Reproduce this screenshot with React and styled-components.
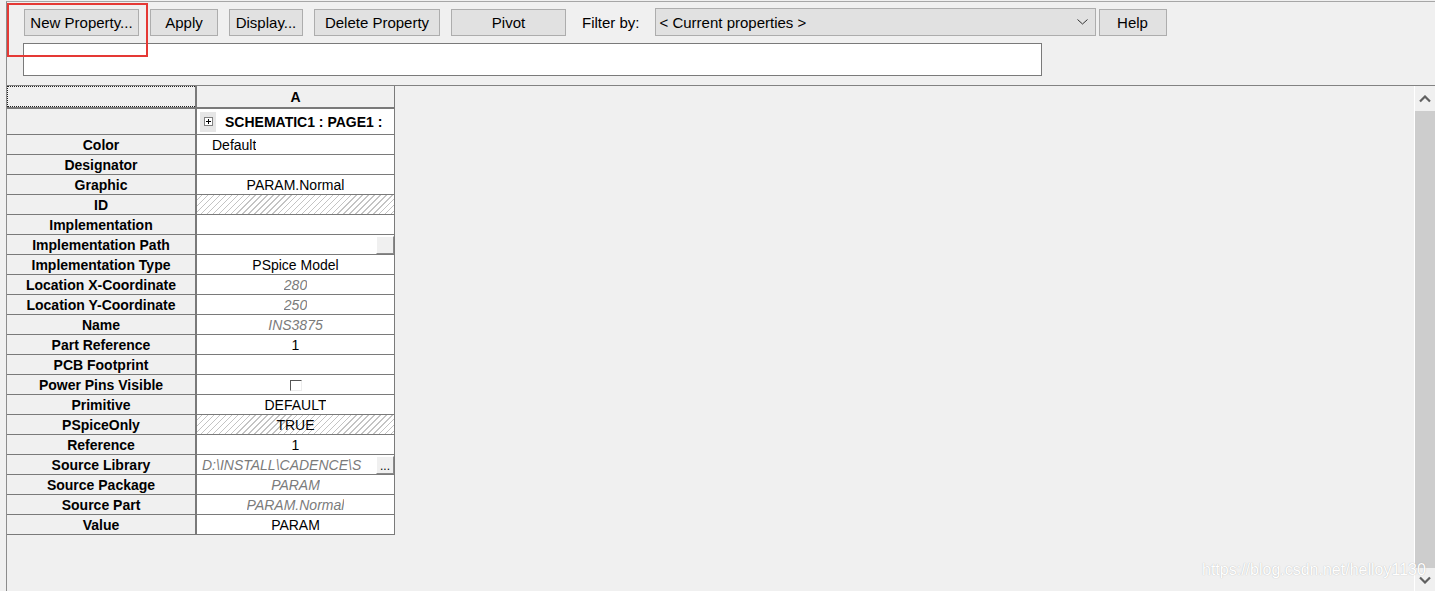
import styled, { createGlobalStyle } from 'styled-components';

const GlobalStyle = createGlobalStyle`
  html, body {
    margin: 0;
    padding: 0;
    background: #f0f0f0;
  }
  * {
    box-sizing: border-box;
  }
`;

const Page = styled.div`
  position: relative;
  width: 1435px;
  height: 591px;
  padding-top: 1px;
  background: #f0f0f0;
  overflow: hidden;
  font-family: "Liberation Sans", Arial, sans-serif;
  color: #000;
`;

const Window = styled.div`
  display: flex;
  flex-direction: column;
  height: 590px;
  margin-left: 6px;
  border-top: 1px solid #a6a6a6;
  border-left: 1px solid #8c8c8c;
`;

const Toolbar = styled.div`
  display: flex;
  flex-direction: column;
  height: 83px;
  padding: 6px 0 0 16px;
`;

const ButtonRow = styled.div`
  display: flex;
  align-items: flex-end;
  gap: 11px;
  height: 28px;
  padding-left: 1px;
`;

const Button = styled.button`
  width: ${(p) => p.$w}px;
  height: 27px;
  padding: 0;
  background: #e1e1e1;
  border: 1px solid #adadad;
  font-family: inherit;
  font-size: 15px;
  color: #000;
  text-align: center;
  line-height: 25px;
`;

const FilterLabel = styled.span`
  margin-left: 5px;
  font-size: 15px;
  line-height: 27px;
`;

const Select = styled.div`
  display: flex;
  align-items: center;
  justify-content: space-between;
  width: 441px;
  height: 28px;
  margin-left: 4px;
  padding: 0 7px 0 4px;
  background: #e1e1e1;
  border: 1px solid #adadad;
  font-size: 15px;
`;

const HelpButton = styled(Button)`
  margin-left: -8px;
`;

const CommandBox = styled.div`
  width: 1019px;
  height: 33px;
  margin-top: 7px;
  background: #fff;
  border: 1px solid #7a7a7a;
`;

const Main = styled.div`
  display: flex;
  flex: 1;
  border-top: 1px solid #828282;
`;

const Sheet = styled.div`
  display: flex;
  flex-direction: column;
  width: 388px;
  align-self: flex-start;
`;

const Row = styled.div`
  display: grid;
  grid-template-columns: 190px 198px;
  height: ${(p) => p.$h || 20}px;
  border-bottom: ${(p) => (p.$thick ? 2 : 1)}px solid #7a7a7a;
`;

const LabelCell = styled.div`
  display: flex;
  align-items: center;
  justify-content: center;
  background: #f0f0f0;
  border-right: 2px solid #7a7a7a;
  font-size: 14px;
  font-weight: bold;
  white-space: nowrap;
`;

const Focus = styled.div`
  width: 100%;
  height: 100%;
  border: 1px dotted #222;
  border-right: none;
`;

const ValueCell = styled.div`
  display: flex;
  align-items: center;
  justify-content: ${(p) => (p.$left ? 'flex-start' : 'center')};
  padding-left: ${(p) => p.$pad || 0}px;
  background: ${(p) =>
    p.$hatch
      ? 'repeating-linear-gradient(135deg, #ffffff 0px, #ffffff 3.2px, #c4c4c4 3.2px, #c4c4c4 4.2px)'
      : p.$header
      ? '#f0f0f0'
      : '#fff'};
  border-right: 1px solid #7a7a7a;
  font-size: 14px;
  font-weight: ${(p) => (p.$bold ? 'bold' : 'normal')};
  font-style: ${(p) => (p.$dim ? 'italic' : 'normal')};
  color: ${(p) => (p.$dim ? '#7b7b7b' : '#000')};
  white-space: nowrap;
  overflow: hidden;
`;

const ValueText = styled.span`
  flex: ${(p) => (p.$grow ? 1 : 'none')};
  overflow: hidden;
`;

const Expander = styled.span`
  display: flex;
  align-items: center;
  justify-content: center;
  width: 16px;
  height: 20px;
  margin: 0 9px 0 3px;
  background: #e6e6e6;
`;

const EllipsisButton = styled.span`
  display: flex;
  align-items: flex-end;
  justify-content: center;
  width: 18px;
  height: 18px;
  background: #f0f0f0;
  border-top: 1px solid #fff;
  border-left: 1px solid #fff;
  border-right: 1px solid #8a8a8a;
  border-bottom: 1px solid #8a8a8a;
  font-style: normal;
  font-size: 12px;
  line-height: 14px;
  color: #000;
`;

const CheckBox = styled.span`
  width: 12px;
  height: 11px;
  margin-top: 2px;
  background: #fff;
  border-top: 1px solid #555;
  border-left: 1px solid #555;
  border-right: 1px solid #ededed;
  border-bottom: 1px solid #ededed;
`;

const Spacer = styled.div`
  flex: 1;
`;

const ScrollBar = styled.div`
  display: flex;
  flex-direction: column;
  width: 21px;
  border-left: 1px solid #fff;
  background: #f0f0f0;
`;

const ArrowButton = styled.div`
  display: flex;
  align-items: center;
  justify-content: center;
  height: ${(p) => p.$h}px;
`;

const Thumb = styled.div`
  flex: 1;
  background: #cdcdcd;
`;

const Annotation = styled.div`
  position: absolute;
  left: 7px;
  top: 3px;
  width: 141px;
  height: 54px;
  border: 2px solid #e53935;
  pointer-events: none;
`;

const Watermark = styled.div`
  position: absolute;
  left: 1202px;
  top: 561px;
  font-size: 16px;
  color: #ffffff;
  text-shadow: 0 0 1px rgba(90, 90, 90, 0.45);
  white-space: nowrap;
`;

const rows = [
  { label: 'Color', value: 'Default', left: true, pad: 15 },
  { label: 'Designator' },
  { label: 'Graphic', value: 'PARAM.Normal' },
  { label: 'ID', hatch: true },
  { label: 'Implementation' },
  { label: 'Implementation Path', button: '' },
  { label: 'Implementation Type', value: 'PSpice Model' },
  { label: 'Location X-Coordinate', value: '280', dim: true },
  { label: 'Location Y-Coordinate', value: '250', dim: true },
  { label: 'Name', value: 'INS3875', dim: true },
  { label: 'Part Reference', value: '1' },
  { label: 'PCB Footprint' },
  { label: 'Power Pins Visible', check: true },
  { label: 'Primitive', value: 'DEFAULT' },
  { label: 'PSpiceOnly', value: 'TRUE', hatch: true },
  { label: 'Reference', value: '1' },
  { label: 'Source Library', value: 'D:\\INSTALL\\CADENCE\\S', dim: true, left: true, pad: 5, button: '...' },
  { label: 'Source Package', value: 'PARAM', dim: true },
  { label: 'Source Part', value: 'PARAM.Normal', dim: true },
  { label: 'Value', value: 'PARAM' },
];

function Chevron({ down }) {
  return (
    <svg width="12" height="8" viewBox="0 0 12 8">
      <polyline
        points={down ? '1,1.5 6,6.5 11,1.5' : '1,6.5 6,1.5 11,6.5'}
        fill="none"
        stroke="#606060"
        strokeWidth="2.2"
      />
    </svg>
  );
}

function PropertyRow({ row }) {
  const hasButton = row.button !== undefined;
  return (
    <Row>
      <LabelCell>{row.label}</LabelCell>
      <ValueCell
        $left={row.left || hasButton}
        $pad={row.pad}
        $hatch={row.hatch}
        $dim={row.dim}
      >
        {row.check && <CheckBox />}
        {row.value && <ValueText $grow={hasButton}>{row.value}</ValueText>}
        {hasButton && !row.value && <ValueText $grow />}
        {hasButton && <EllipsisButton>{row.button}</EllipsisButton>}
      </ValueCell>
    </Row>
  );
}

export default function App() {
  return (
    <Page>
      <GlobalStyle />
      <Window>
        <Toolbar>
          <ButtonRow>
            <Button $w={115}>New Property...</Button>
            <Button $w={68}>Apply</Button>
            <Button $w={74}>Display...</Button>
            <Button $w={126}>Delete Property</Button>
            <Button $w={115}>Pivot</Button>
            <FilterLabel>Filter by:</FilterLabel>
            <Select>
              <span>&lt; Current properties &gt;</span>
              <svg width="11" height="6" viewBox="0 0 11 6">
                <polyline points="0.5,0.5 5.5,5 10.5,0.5" fill="none" stroke="#333" strokeWidth="1" />
              </svg>
            </Select>
            <HelpButton $w={68}>Help</HelpButton>
          </ButtonRow>
          <CommandBox />
        </Toolbar>
        <Main>
          <Sheet>
            <Row $h={23} $thick>
              <LabelCell>
                <Focus />
              </LabelCell>
              <ValueCell $header $bold>A</ValueCell>
            </Row>
            <Row $h={26}>
              <LabelCell />
              <ValueCell $left $bold>
                <Expander>
                  <svg width="9" height="9" viewBox="0 0 9 9">
                    <rect x="0.5" y="0.5" width="8" height="8" fill="#fff" stroke="#808080" />
                    <line x1="2" y1="4.5" x2="7" y2="4.5" stroke="#000" />
                    <line x1="4.5" y1="2" x2="4.5" y2="7" stroke="#000" />
                  </svg>
                </Expander>
                SCHEMATIC1 : PAGE1 :
              </ValueCell>
            </Row>
            {rows.map((row) => (
              <PropertyRow key={row.label} row={row} />
            ))}
          </Sheet>
          <Spacer />
          <ScrollBar>
            <ArrowButton $h={25}>
              <Chevron />
            </ArrowButton>
            <Thumb />
            <ArrowButton $h={23}>
              <Chevron down />
            </ArrowButton>
          </ScrollBar>
        </Main>
      </Window>
      <Annotation />
      <Watermark>https://blog.csdn.net/helloy1130</Watermark>
    </Page>
  );
}
